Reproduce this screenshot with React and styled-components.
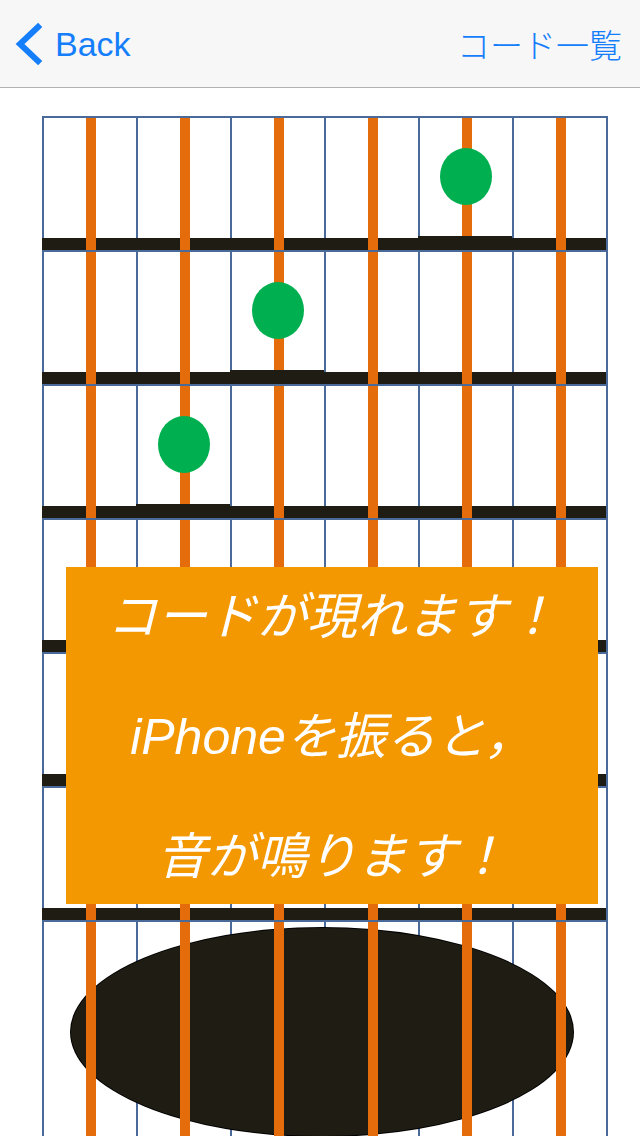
import React from 'react'
import styled, { createGlobalStyle } from 'styled-components'

const GlobalStyle = createGlobalStyle`
  html, body {
    margin: 0;
    padding: 0;
    background: #ffffff;
    overflow: hidden;
  }
`

// fingering: row index -> column index
const dots = { 0: 4, 1: 2, 2: 1 }
const rows = [0, 1, 2, 3, 4, 5]
const cols = [0, 1, 2, 3, 4, 5]

function App() {
  return (
    <Screen>
      <GlobalStyle />
      <NavBar>
        <BackButton>
          <svg width="30" height="44" viewBox="0 0 30 44">
            <polyline points="25,5 7,22 25,39" fill="none" stroke="#157efb" strokeWidth="6" strokeLinecap="square" />
          </svg>
          <span>Back</span>
        </BackButton>
        <NavTitle>コード一覧</NavTitle>
      </NavBar>

      <Content>
        <Board>
          {rows.map((r) => (
            <FretRow key={r}>
              {cols.map((c) => (
                <Cell key={c} $dot={dots[r] === c}>
                  {dots[r] === c && <Dot />}
                </Cell>
              ))}
            </FretRow>
          ))}
          <Body>
            {cols.map((c) => (
              <BodyCell key={c} />
            ))}
            <SoundHole />
          </Body>

          <Notice>
            <NoticeLine>コードが現れます！</NoticeLine>
            <NoticeLine>iPhoneを振ると，</NoticeLine>
            <NoticeLine>音が鳴ります！</NoticeLine>
          </Notice>
        </Board>
      </Content>
    </Screen>
  )
}

const Screen = styled.div`
  width: 640px;
  height: 1136px;
  overflow: hidden;
  font-family: "Liberation Sans", "Noto Sans CJK JP", sans-serif;
`

const NavBar = styled.header`
  height: 87px;
  background: #f7f7f7;
  border-bottom: 1px solid #b2b2b2;
  display: flex;
  align-items: center;
  justify-content: space-between;
  padding: 0 18px 0 13px;
`

const BackButton = styled.div`
  display: flex;
  align-items: center;
  gap: 12px;
  color: #157efb;
  font-size: 34px;
  font-family: "Liberation Sans", Arial, sans-serif;
  margin-top: 1px;

  svg {
    display: block;
  }
`

const NavTitle = styled.div`
  color: #157efb;
  font-size: 33px;
  font-weight: 300;
  font-family: "Noto Sans CJK JP", sans-serif;
`

const Content = styled.main`
  padding: 28px 0 0 42px;
`

const Board = styled.div`
  position: relative;
  width: 566px;
`

const FretRow = styled.div`
  display: grid;
  grid-template-columns: repeat(6, 94px) 2px;
`

const Cell = styled.div`
  position: relative;
  box-sizing: border-box;
  height: 134px;
  border-left: 2px solid #4a6b9a;
  border-top: 2px solid #4a6b9a;
  background: #ffffff;

  &:last-child {
    border-right: 2px solid #4a6b9a;
    width: 96px;
  }

  &::before {
    content: "";
    position: absolute;
    top: 0;
    bottom: ${(p) => (p.$dot ? '12px' : '0')};
    left: 42px;
    width: 10px;
    background: #e46c0a;
    z-index: 2;
  }

  &::after {
    content: "";
    position: absolute;
    left: -2px;
    right: 0;
    bottom: 0;
    height: ${(p) => (p.$dot ? '14px' : '12px')};
    background: #1f1d13;
    z-index: ${(p) => (p.$dot ? 3 : 1)};
  }
`

const Dot = styled.div`
  position: absolute;
  left: 20px;
  top: 30px;
  width: 52px;
  height: 57px;
  border-radius: 50%;
  background: #00b050;
  z-index: 4;
`

const Body = styled.div`
  position: relative;
  z-index: 0;
  display: grid;
  grid-template-columns: repeat(6, 94px) 2px;
  height: 216px;
  overflow: hidden;
`

const BodyCell = styled.div`
  position: relative;
  box-sizing: border-box;
  height: 216px;
  border-left: 2px solid #4a6b9a;
  border-top: 2px solid #4a6b9a;

  &:nth-child(6) {
    border-right: 2px solid #4a6b9a;
    width: 96px;
  }

  &::before {
    content: "";
    position: absolute;
    top: 0;
    bottom: 0;
    left: 42px;
    width: 10px;
    background: #e46c0a;
    z-index: 2;
  }
`

const SoundHole = styled.div`
  position: absolute;
  left: 29px;
  top: 8px;
  width: 502px;
  height: 208px;
  border-radius: 50%;
  background: #1f1c13;
  box-shadow: 0 0 0 1px #000000;
  z-index: 1;
`

const Notice = styled.div`
  position: absolute;
  left: 24px;
  top: 451px;
  width: 532px;
  height: 337px;
  box-sizing: border-box;
  padding-top: 25px;
  background: #f39800;
  display: flex;
  flex-direction: column;
  align-items: center;
  gap: 70px;
  z-index: 10;
`

const NoticeLine = styled.div`
  color: #ffffff;
  font-size: 50px;
  line-height: 50px;
  font-style: italic;
  font-family: "Liberation Sans", "Noto Sans CJK JP", sans-serif;
  white-space: nowrap;
`

export default App
